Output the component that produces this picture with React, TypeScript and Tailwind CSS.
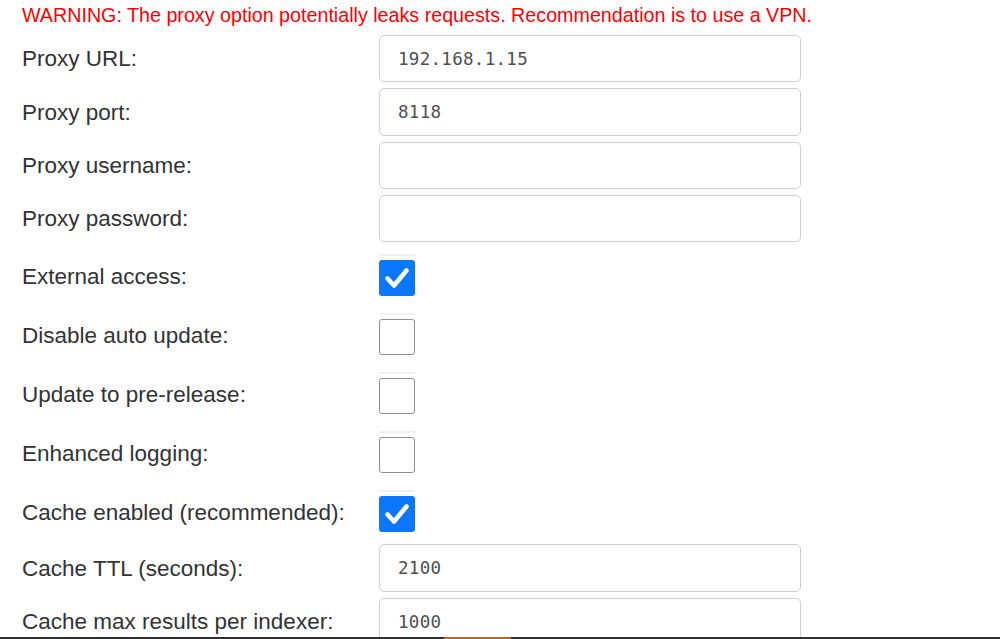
import React from "react";

type Field =
  | { kind: "text"; label: string; value: string }
  | { kind: "check"; label: string; checked: boolean };

const top: Field[] = [
  { kind: "text", label: "Proxy URL:", value: "192.168.1.15" },
  { kind: "text", label: "Proxy port:", value: "8118" },
  { kind: "text", label: "Proxy username:", value: "" },
  { kind: "text", label: "Proxy password:", value: "" },
];

const checks: Field[] = [
  { kind: "check", label: "External access:", checked: true },
  { kind: "check", label: "Disable auto update:", checked: false },
  { kind: "check", label: "Update to pre-release:", checked: false },
  { kind: "check", label: "Enhanced logging:", checked: false },
  { kind: "check", label: "Cache enabled (recommended):", checked: true },
];

const cache: Field[] = [
  { kind: "text", label: "Cache TTL (seconds):", value: "2100" },
  { kind: "text", label: "Cache max results per indexer:", value: "1000" },
];

function Label({ text, raised }: { text: string; raised?: boolean }) {
  return (
    <label
      className={
        raised
          ? "w-[357px] shrink-0 pb-[2px] text-[22.5px] leading-none text-[#333] font-['Liberation_Sans',Arial,sans-serif]"
          : "w-[357px] shrink-0 pt-[2px] text-[22.5px] leading-none text-[#333] font-['Liberation_Sans',Arial,sans-serif]"
      }
    >
      {text}
    </label>
  );
}

function TextRow({ label, value }: { label: string; value: string }) {
  return (
    <div className="flex h-[53.33px] items-center">
      <Label text={label} />
      <input
        readOnly
        value={value}
        className="h-[47.3px] w-[422px] rounded-[5px] border border-[#cfcfcf] bg-white pl-[18px] pt-[1px] text-[17.5px] tracking-[0.3px] text-[#505050] outline-none font-['DejaVu_Sans_Mono','Liberation_Mono',monospace]"
      />
    </div>
  );
}

function CheckRow({ label, checked }: { label: string; checked: boolean }) {
  return (
    <div className="flex h-[59px] items-center">
      <Label text={label} raised />
      <div className="flex flex-col">
        <div className="h-[2.5px] w-[36px] bg-[#f0f0f0]" />
        <div className="h-[3.5px]" />
        {checked ? (
          <div className="flex h-[36px] w-[36px] items-center justify-center rounded-[3px] bg-[#0b76fe]">
            <svg viewBox="0 0 36 36" className="h-[36px] w-[36px]">
              <polyline
                points="8.5,18.5 15,25.5 27.5,10.5"
                fill="none"
                stroke="#fff"
                strokeWidth="4.6"
                strokeLinecap="round"
                strokeLinejoin="round"
              />
            </svg>
          </div>
        ) : (
          <div className="h-[36px] w-[36px] rounded-[3px] border-[1.5px] border-[#8f8f8f] bg-white" />
        )}
        <div className="h-[6px]" />
      </div>
    </div>
  );
}

export default function App() {
  return (
    <div className="relative h-[639px] w-[1000px] overflow-hidden bg-white pl-[22px]">
      <div className="flex h-[32px] items-center text-[19.7px] leading-none text-[#ff0000] font-['Liberation_Sans',Arial,sans-serif]">
        WARNING: The proxy option potentially leaks requests. Recommendation is to use a VPN.
      </div>
      {top.map((f) => f.kind === "text" && <TextRow key={f.label} label={f.label} value={f.value} />)}
      <div className="mt-[3px]">
        {checks.map((f) => f.kind === "check" && <CheckRow key={f.label} label={f.label} checked={f.checked} />)}
      </div>
      <div className="-mt-[2px]">
        {cache.map((f) => f.kind === "text" && <TextRow key={f.label} label={f.label} value={f.value} />)}
      </div>
      {/* status strip along the window's bottom edge */}
      <div className="absolute bottom-0 left-0 flex h-[2px] w-full bg-[#2e2e2e]">
        <div className="ml-[444px] h-full w-[67px] bg-[#c2651f]" />
      </div>
    </div>
  );
}
